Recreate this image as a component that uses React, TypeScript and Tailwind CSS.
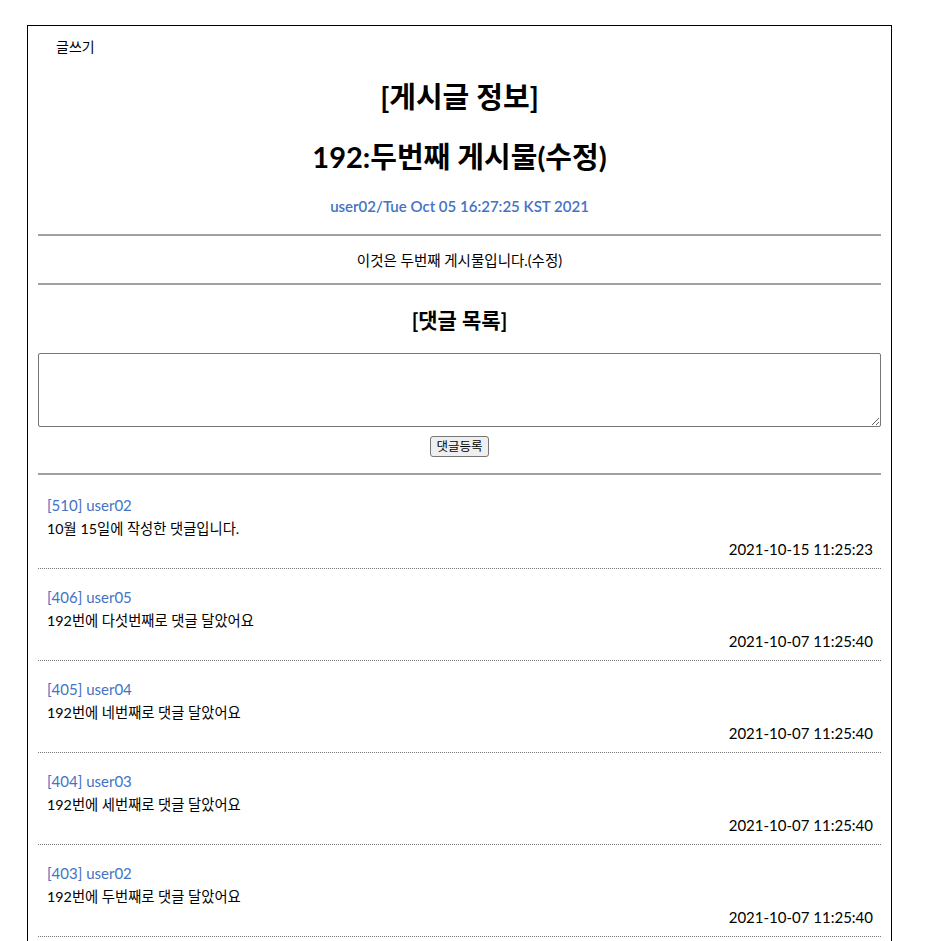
const comments = [
  { id: 510, user: "user02", text: "10월 15일에 작성한 댓글입니다.", date: "2021-10-15 11:25:23" },
  { id: 406, user: "user05", text: "192번에 다섯번째로 댓글 달았어요", date: "2021-10-07 11:25:40" },
  { id: 405, user: "user04", text: "192번에 네번째로 댓글 달았어요", date: "2021-10-07 11:25:40" },
  { id: 404, user: "user03", text: "192번에 세번째로 댓글 달았어요", date: "2021-10-07 11:25:40" },
  { id: 403, user: "user02", text: "192번에 두번째로 댓글 달았어요", date: "2021-10-07 11:25:40" },
];

export default function App() {
  return (
    <div className="min-h-screen bg-white font-['Lato','Noto_Sans_CJK_KR',sans-serif] text-black">
      {/* board container */}
      <div className="ml-[27px] mt-[25px] w-[865px] border border-black px-[10px] pb-[30px]">
        {/* nav */}
        <div className="flex h-[40px] items-center pl-[18px] text-[14px]">
          <a href="#" className="text-black">글쓰기</a>
        </div>

        {/* post header */}
        <h1 className="mt-[11px] text-center text-[29px] font-bold leading-[40px]">[게시글 정보]</h1>
        <h2 className="mt-[20px] text-center text-[29px] font-bold leading-[40px]">192:두번째 게시물(수정)</h2>
        <p className="mt-[19px] text-center text-[15px] font-semibold leading-[20px] text-[#4472c4]">
          user02/Tue Oct 05 16:27:25 KST 2021
        </p>
        <hr className="mt-[18px] border-t-2 border-[#a0a0a0]" />

        {/* post body */}
        <p className="mt-[15px] text-center text-[14.5px] leading-[20px]">이것은 두번째 게시물입니다.(수정)</p>
        <hr className="mt-[12px] border-t-2 border-[#a0a0a0]" />

        {/* comments */}
        <h3 className="mt-[20px] text-center text-[21px] font-bold leading-[30px]">[댓글 목록]</h3>
        <textarea className="mt-[18px] block h-[74px] w-full rounded-[2px] border border-[#767676] p-1 text-[13px]" />
        <div className="mt-[9px] flex justify-center">
          <button className="h-[21px] rounded-[3px] border border-[#767676] bg-[#efefef] px-[5px] text-[12.5px] leading-[18px]">
            댓글등록
          </button>
        </div>
        <hr className="mt-[16px] border-t-2 border-[#a0a0a0]" />

        <ul>
          {comments.map((c) => (
            <li
              key={c.id}
              className="border-b border-dotted border-[#777] pb-[9px] pl-[9px] pr-[8px] pt-[18px] first:pt-[20px]"
            >
              <div className="text-[15px] leading-[20px] text-[#4472c4]">
                [{c.id}] {c.user}
              </div>
              <div className="mt-[4px] text-[14.3px] leading-[20px]">{c.text}</div>
              <div className="text-right text-[15px] leading-[20px]">{c.date}</div>
            </li>
          ))}
        </ul>
      </div>
    </div>
  );
}
